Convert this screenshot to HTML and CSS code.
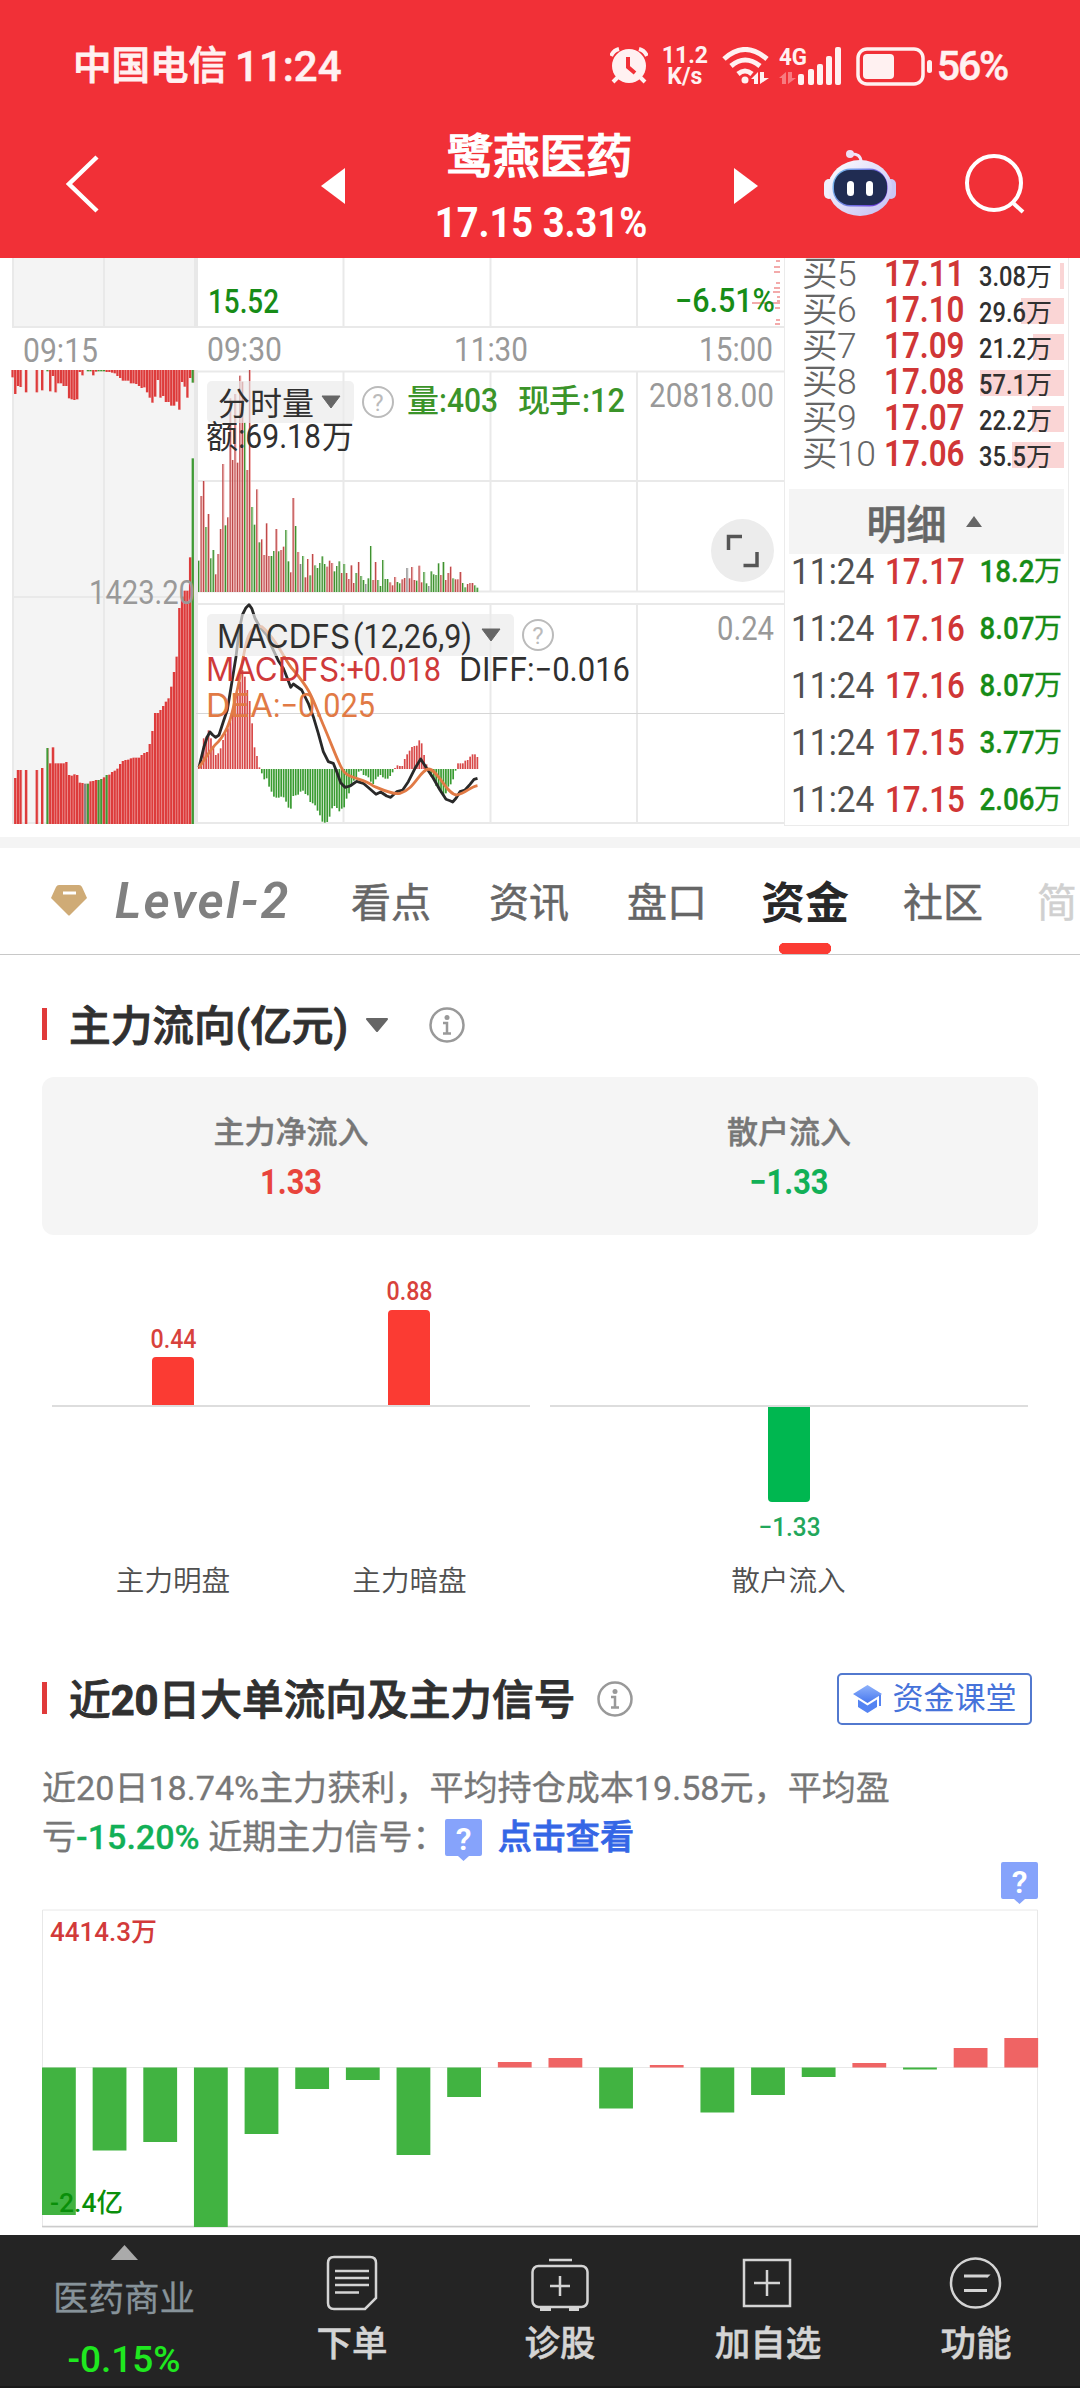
FILE: index.html
```html
<!DOCTYPE html>
<html lang="zh-CN">
<head>
<meta charset="utf-8">
<title>鹭燕医药</title>
<link rel="stylesheet" href="styles.css">
</head>
<body>
<header class="top">
  <div class="status">
    <span class="carrier">中国电信</span><span class="clock">11:24</span>
    <div class="status-icons">
      <svg class="ic-alarm" width="38" height="38" viewBox="0 0 38 38"><circle cx="19" cy="19" r="17" fill="#fff1f1"/><path d="M8 30l-5 5M30 30l5 5" stroke="#fff1f1" stroke-width="4"/><path d="M1 9a12 12 0 0 1 8-7M37 9a12 12 0 0 0-8-7" stroke="#fff1f1" stroke-width="4" fill="none"/><path d="M18 10v10l7 6" stroke="#f13037" stroke-width="4" fill="none"/></svg>
      <div class="speed"><span>11.2</span><span>K/s</span></div>
      <svg class="ic-wifi" width="47" height="38" viewBox="0 0 47 38" fill="none" stroke="#fff1f1" stroke-width="5"><path d="M2 12Q23-7 45 12M9 19Q23 7 38 19M16 27q7-6 14 0" /><circle cx="23" cy="33" r="3.5" fill="#fff1f1" stroke="none"/><path d="M29 32l7-7v12h-4v-5zM38 25v12l9-6h-5v-6z" fill="#fff1f1" stroke="none"/></svg>
      <svg class="ic-signal" width="63" height="38" viewBox="0 0 63 38" fill="#fff1f1"><text class="net" x="0" y="18" textLength="28" lengthAdjust="spacingAndGlyphs">4G</text><path d="M0 31l7-6v12h-4v-6zM9 25v12l8-6h-4v-6z" fill="#f77b80"/><rect x="19" y="27" width="6" height="11" rx="2"/><rect x="29" y="22" width="6" height="16" rx="2"/><rect x="38" y="17" width="6" height="21" rx="2"/><rect x="47" y="9" width="6" height="29" rx="2"/><rect x="56" y="0" width="6" height="38" rx="2"/></svg>
      <svg class="ic-battery" width="77" height="39" viewBox="0 0 77 39"><rect x="2" y="2" width="65" height="35" rx="9" fill="none" stroke="#fff1f1" stroke-width="3.5"/><rect x="7" y="7" width="31" height="25" rx="4" fill="#fff1f1"/><rect x="71" y="13" width="5" height="13" rx="2.5" fill="#fff1f1"/></svg>
      <span class="percent">56%</span>
    </div>
  </div>
  <div class="title-bar">
    <svg class="back" width="36" height="60" viewBox="0 0 36 60"><path d="M32 3L4 30l28 27" fill="none" stroke="#fff" stroke-width="4.5"/></svg>
    <svg class="prev" width="24" height="36" viewBox="0 0 24 36"><path d="M24 0v36L0 18z" fill="#fff"/></svg>
    <div class="stock"><h1>鹭燕医药</h1><p><span>17.15 3.31%</span></p></div>
    <svg class="next" width="24" height="36" viewBox="0 0 24 36"><path d="M0 0v36l24-18z" fill="#fff"/></svg>
    <svg class="robot" width="72" height="66" viewBox="0 0 72 66">
      <defs><linearGradient id="shell" x2="1" y2="1"><stop stop-color="#fff"/><stop offset="1" stop-color="#c2bdf2"/></linearGradient><linearGradient id="rim" x2="1" y2=".4"><stop stop-color="#79c6ee"/><stop offset="1" stop-color="#6a3fd9"/></linearGradient></defs>
      <path d="M26 4q11-1 11 8" fill="none" stroke="#f1e6fa" stroke-width="3"/><circle cx="26" cy="4" r="4" fill="#eddff5"/>
      <rect x="0" y="29" width="10" height="20" rx="5" fill="#f0effc"/><rect x="62" y="29" width="10" height="20" rx="5" fill="#cbc7f5"/>
      <ellipse cx="36" cy="38" rx="32" ry="28" fill="url(#shell)"/><rect x="8.500" y="18.500" width="55" height="38" rx="18" fill="url(#rim)"/><rect x="10" y="20" width="53" height="35" rx="16" fill="#202c52"/>
      <rect x="23" y="31" width="7" height="15" rx="3.5" fill="#fff"/><rect x="42" y="31" width="7" height="15" rx="3.5" fill="#fff"/>
    </svg>
    <svg class="search" width="62" height="62" viewBox="0 0 62 62" fill="none" stroke="#fff" stroke-width="4"><circle cx="30" cy="29" r="27"/><path d="M48 48l11 10"/></svg>
  </div>
</header>

<section class="quote">
  <svg class="trend" width="784" height="579" viewBox="0 258 784 579">
    <path class="pre" d="M13 258h182v70H13zM13 370h182v454H13z"/>
    <path class="grid" d="M13 258v70M104 258v70M343.500 258v70M490.500 258v70M637 258v70M13 327h771M13 370v454M104 370v454M343.500 371v221M490.500 371v221M637 371v221M196 371.500h588M196 481h588M196 591.500h588M13 597h182M196 604h588M343.500 604v219M490.500 604v219M637 604v219M13 823h771"/>
    <path class="axis" d="M196 258v70M196 370v454"/>
    <path class="thin" d="M196 713.500h588"/>
    <path class="pinkbars" d="M774 267h6M776 261h4M774 272h6M776 283h4M774 288h6M773 292h7M777 297h3M777 301h3M752 303h28M775 308h5M776 320h4M775 324h5"/>
    <g id="preopen"></g><g id="volume"></g><g id="macd"></g>
    <path class="diff" d="M199 767.300L204 746.700 207.300 736.700 210 732 212.700 735 215.700 737.300 219 735 223.300 721.700 227.300 710 231.700 683.300 236 656.700 239.300 630 242.300 615 246 607.700 249 604.700 251.700 608.300 255 618.300 259.300 626 266.700 635 271.700 646.700 278.300 660.700 283.300 668.300 287.300 678.300 290.700 687.300 293.300 684 301.700 690 308.300 703.300 313.300 716.700 318.300 733.300 323.300 751.700 328.300 761.700 333.300 763.300 337.300 773.300 340.700 782.700 345 787.300 350 786 356.700 781.300 363.300 783.300 370 789 376 794.300 380.700 792 386.700 796 390.700 797.300 396.700 791.700 402.700 790 408.300 781.700 415 768.300 420.700 759 426.700 768.300 433.300 778.300 440 790 446 799.300 450 800.700 452.700 802 456 798.300 460 791.700 465 790 470 784.300 474 779.300 477.500 778.300"/>
    <path class="dea" d="M199 767.300C207 757 209 750 218.300 741.700C228 731 231 721 240 676.700C246 638 249 625 261.700 626.700C277 639 286 663 293.300 670C312 692 312 698 323.300 725C337 757 341 772 348 775C357 780 364 779 373.300 786C383 790 394 795 400 793.300C414 790 420 770 428.300 769C438 769 446 794 456.700 795C466 793 470 787 477.500 785.700"/>
    <rect class="chip" x="207" y="381" width="147" height="42" rx="5"/>
    <rect class="chip" x="207" y="614" width="307" height="42" rx="5"/>
    <path d="M322 396h18l-9 12zM482 629h18l-9 12z" fill="#666" stroke="#666" stroke-linejoin="round"/>
    <g fill="none" stroke="#bbb" stroke-width="2"><circle cx="378" cy="402" r="15"/><circle cx="538" cy="635" r="15"/></g>
    <text class="help" x="378" y="411">?</text><text class="help" x="538" y="644">?</text>
    <g class="num">
      <text class="down" x="208" y="313" textLength="71" lengthAdjust="spacingAndGlyphs">15.52</text>
      <text class="down" x="675" y="312" textLength="100" lengthAdjust="spacingAndGlyphs">−6.51%</text>
      <text class="muted" x="23" y="362" textLength="75" lengthAdjust="spacingAndGlyphs">09:15</text>
      <text class="muted" x="207" y="361" textLength="75" lengthAdjust="spacingAndGlyphs">09:30</text>
      <text class="muted" x="454" y="361" textLength="74" lengthAdjust="spacingAndGlyphs">11:30</text>
      <text class="muted" x="699" y="361" textLength="74" lengthAdjust="spacingAndGlyphs">15:00</text>
      <text class="muted" x="89" y="604" textLength="106" lengthAdjust="spacingAndGlyphs">1423.20</text>
      <text class="muted" x="649" y="407" textLength="125" lengthAdjust="spacingAndGlyphs">20818.00</text>
      <text class="muted" x="717" y="640" textLength="57" lengthAdjust="spacingAndGlyphs">0.24</text>
      <text class="dark cn" x="218" y="415" textLength="96">分时量</text>
      <text class="vol cn" x="407" y="412">量</text><text class="vol" x="439" y="412" textLength="59" lengthAdjust="spacingAndGlyphs">:403</text>
      <text class="vol cn" x="518" y="412" textLength="63">现手</text><text class="vol" x="582" y="412" textLength="43" lengthAdjust="spacingAndGlyphs">:12</text>
      <text class="dark cn" x="206" y="448">额</text><text class="dark" x="238" y="448" textLength="83" lengthAdjust="spacingAndGlyphs">:69.18</text><text class="dark cn" x="322" y="448">万</text>
      <text class="dark latin" x="217" y="648" textLength="133" lengthAdjust="spacingAndGlyphs">MACDFS</text><text class="dark" x="353" y="648" textLength="119" lengthAdjust="spacingAndGlyphs">(12,26,9)</text>
      <text class="red latin" x="206" y="681" textLength="133" lengthAdjust="spacingAndGlyphs">MACDFS</text><text class="red" x="339" y="681" textLength="102" lengthAdjust="spacingAndGlyphs">:+0.018</text>
      <text class="dark latin" x="459" y="681" textLength="69" lengthAdjust="spacingAndGlyphs">DIFF</text><text class="dark" x="527" y="681" textLength="103" lengthAdjust="spacingAndGlyphs">:−0.016</text>
      <text class="orange latin" x="206" y="717" textLength="67" lengthAdjust="spacingAndGlyphs">DEA</text><text class="orange" x="273" y="717" textLength="102" lengthAdjust="spacingAndGlyphs">:−0.025</text>
    </g>
    <circle cx="742.500" cy="550.500" r="31.500" fill="#ececec"/>
    <path d="M728.500 550v-13.500H742M757 552v13.500h-13.500" fill="none" stroke="#555" stroke-width="3.500"/>
  </svg>
  <aside class="book">
    <div class="bids">
      <div class="bid"><span>买5</span><b>17.11</b><em><i>3.08</i>万</em><u style="width:4px"></u></div>
      <div class="bid"><span>买6</span><b>17.10</b><em><i>29.6</i>万</em><u style="width:43px"></u></div>
      <div class="bid"><span>买7</span><b>17.09</b><em><i>21.2</i>万</em><u style="width:31px"></u></div>
      <div class="bid"><span>买8</span><b>17.08</b><em><i>57.1</i>万</em><u style="width:84px"></u></div>
      <div class="bid"><span>买9</span><b>17.07</b><em><i>22.2</i>万</em><u style="width:32px"></u></div>
      <div class="bid"><span>买10</span><b>17.06</b><em><i>35.5</i>万</em><u style="width:52px"></u></div>
    </div>
    <div class="ticks-head">明细<svg width="16" height="11" viewBox="0 0 16 11"><path d="M8 0l8 11H0z" fill="#666"/></svg></div>
    <div class="tick"><span>11:24</span><b>17.17</b><em><i>18.2</i>万</em></div>
    <div class="tick"><span>11:24</span><b>17.16</b><em><i>8.07</i>万</em></div>
    <div class="tick"><span>11:24</span><b>17.16</b><em><i>8.07</i>万</em></div>
    <div class="tick"><span>11:24</span><b>17.15</b><em><i>3.77</i>万</em></div>
    <div class="tick"><span>11:24</span><b>17.15</b><em><i>2.06</i>万</em></div>
  </aside>
</section>

<nav class="tabs">
  <svg class="gem" width="36" height="32" viewBox="0 0 36 32"><path d="M8 1h20q2 0 3 2l5 11L19 31q-1 1-2 0L0 14 5 3q1-2 3-2z" fill="#cfab76"/><path d="M12 9h13" stroke="#fff" stroke-width="3"/></svg>
  <span class="level">Level-2</span>
  <a>看点</a><a>资讯</a><a>盘口</a><a class="active">资金</a><a>社区</a><a class="fade">简</a>
</nav>

<section class="flow">
  <div class="heading"><h2>主力流向(亿元)</h2>
    <svg class="caret" width="24" height="14" viewBox="0 0 24 14"><path d="M2 1h20L12 13z" fill="#666" stroke="#666" stroke-width="2" stroke-linejoin="round"/></svg>
    <svg class="info" width="38" height="38" viewBox="0 0 38 38"><circle cx="19" cy="19" r="16.500" fill="none" stroke="#999" stroke-width="2.500"/><circle cx="19" cy="11.500" r="2.500" fill="#999"/><path d="M15 17h4v10M15 27.500h8" fill="none" stroke="#999" stroke-width="2.500"/></svg>
  </div>
  <div class="summary">
    <div><p>主力净流入</p><b class="in">1.33</b></div>
    <div><p>散户流入</p><b class="out">−1.33</b></div>
  </div>
  <svg class="split" width="1080" height="365" viewBox="0 1240 1080 365">
    <path d="M52 1406h478M550 1406h478" stroke="#ddd" stroke-width="2"/>
    <path d="M152 1405v-44q0-4 4-4h34q4 0 4 4v44zM388 1405v-91q0-4 4-4h34q4 0 4 4v91z" fill="#fb3b33"/>
    <path d="M768 1407v91q0 4 4 4h34q4 0 4-4v-91z" fill="#00b750"/>
    <g class="val"><text x="173.500" y="1348" fill="#d8423c" textLength="46" lengthAdjust="spacingAndGlyphs">0.44</text><text x="409.500" y="1300" fill="#d8423c" textLength="46" lengthAdjust="spacingAndGlyphs">0.88</text><text x="789.500" y="1536" fill="#22a75b" textLength="62" lengthAdjust="spacingAndGlyphs">−1.33</text></g>
    <g class="cat"><text x="173" y="1591">主力明盘</text><text x="409.500" y="1591">主力暗盘</text><text x="788.500" y="1591">散户流入</text></g>
  </svg>
</section>

<section class="orders">
  <div class="heading"><h2>近<strong>20</strong>日大单流向及主力信号</h2>
    <svg class="info" width="38" height="38" viewBox="0 0 38 38"><circle cx="19" cy="19" r="16.500" fill="none" stroke="#999" stroke-width="2.500"/><circle cx="19" cy="11.500" r="2.500" fill="#999"/><path d="M15 17h4v10M15 27.500h8" fill="none" stroke="#999" stroke-width="2.500"/></svg>
    <a class="course"><svg width="29" height="28" viewBox="0 0 29 28"><defs><linearGradient id="hat" x2="0" y2="1"><stop stop-color="#8fb2fb"/><stop offset="1" stop-color="#4878ee"/></linearGradient></defs><path d="M14.500 0L29 9 14.500 18 0 9z" fill="url(#hat)"/><path d="M5 14.500l9.500 6 9.500-6V22l-9.500 6L5 22z" fill="#5584f2"/><path d="M27 10v11" stroke="#5584f2" stroke-width="2"/></svg>资金课堂</a>
  </div>
  <p class="note">近20日18.74%主力获利，平均持仓成本19.58元，平均盈<br>亏<b>-15.20%</b> 近期主力信号：<svg class="ask" width="37" height="43" viewBox="0 0 37 43"><path d="M2 0h33q2 0 2 2v33q0 2-2 2H24l-5.500 5L13 37H2q-2 0-2-2V2q0-2 2-2z" fill="#86a3fb"/><text x="18.500" y="31">?</text></svg><a>点击查看</a></p>
  <div class="marker"><svg class="ask" width="37" height="43" viewBox="0 0 37 43"><path d="M2 0h33q2 0 2 2v33q0 2-2 2H24l-5.500 5L13 37H2q-2 0-2-2V2q0-2 2-2z" fill="#86a3fb"/><text x="18.500" y="31">?</text></svg></div>
  <svg class="history" width="1080" height="326" viewBox="0 1909 1080 326">
    <path d="M42.500 1910h995v317h-995zM42 2067.500h996" fill="none" stroke="#e8e8e8"/><path d="M42 2226.500h996" stroke="#ccc" stroke-width="1.500"/>
    <g id="history"></g>
    <text class="hi" x="50" y="1941" textLength="107" lengthAdjust="spacingAndGlyphs">4414.3万</text><text class="lo" x="50" y="2212" textLength="73" lengthAdjust="spacingAndGlyphs">-2.4亿</text>
  </svg>
</section>

<footer class="bottom">
  <div class="sector"><svg width="27" height="15" viewBox="0 0 27 15"><path d="M13.500 0L27 15H0z" fill="#aaa"/></svg><span>医药商业</span><b>-0.15%</b></div>
  <div class="action"><svg width="58" height="58" viewBox="0 0 58 58"><path d="M11 3h36q6 0 6 6v35L42 55H11q-6 0-6-6V9q0-6 6-6z"/><path d="M12 17h34M12 24h34M12 31h34M12 38.500h24"/></svg><span>下单</span></div>
  <div class="action"><svg width="58" height="58" viewBox="0 0 58 58"><rect x="1.500" y="12" width="55" height="41" rx="6"/><path d="M18 6h23M29 22v20M19 32h20"/><path d="M9 55h11M38 55h10" stroke-width="4"/></svg><span>诊股</span></div>
  <div class="action"><svg width="58" height="58" viewBox="0 0 58 58"><path d="M5 6h46v46H5zM28 16v26M15 29h26"/></svg><span>加自选</span></div>
  <div class="action"><svg width="58" height="58" viewBox="0 0 58 58"><circle cx="28.500" cy="29" r="24.500"/><path d="M17 22h23l-1 1M17 36.500h23" stroke-width="3"/></svg><span>功能</span></div>
</footer>
<script src="charts.js"></script>
</body>
</html>
```
FILE: styles.css
```css
* { box-sizing: border-box; margin: 0; padding: 0; }
body { width: 1080px; height: 2388px; overflow: hidden; background: #fff; color: #333; font-family: Roboto, "Noto Sans CJK SC", sans-serif; display: flex; flex-direction: column; }
svg { display: block; flex: none; }
i, em { font-style: normal; }
u { text-decoration: none; }

.top { height: 258px; background: #f13037; color: #fff; flex: none; }
.status { height: 132px; padding: 0 73px 0 73px; display: flex; align-items: center; color: #fff1f1; font-weight: 500; }
.carrier { font-size: 38.5px; line-height: 50px; -webkit-text-stroke: .9px; }
.clock { font-size: 42px; margin-left: 8px; -webkit-text-stroke: .5px; }
.status-icons { margin-left: auto; display: flex; align-items: center; }
.speed { width: 46px; margin: 0 14px 0 14px; font: 700 23px/21px Roboto, sans-serif; text-align: center; display: flex; flex-direction: column; }
.ic-signal { margin-left: 10px; overflow: visible; }
.ic-battery { margin-left: 14px; }
.net { font: 700 23px Roboto, sans-serif; }
.percent { font-size: 41px; margin-left: 4px; letter-spacing: -2.2px; -webkit-text-stroke: .5px; }
.title-bar { height: 126px; display: flex; align-items: flex-start; padding: 0 54px 0 65px; }
.back { margin-top: 22px; }
.prev { margin: 36px 0 0 220px; }
.stock { width: 390px; text-align: center; margin-top: 0; }
.stock h1 { font-size: 46.5px; line-height: 50px; font-weight: 500; -webkit-text-stroke: 1.2px; }
.stock p { font-size: 43px; line-height: 50px; font-weight: 700; margin-top: 15px; white-space: nowrap; }
.stock p span { display: inline-block; transform: scaleX(.885); margin-right: -4px; }
.next { margin-top: 36px; }
.robot { margin: 18px 0 0 66px; }
.search { margin: 22px 0 0 68px; }

.quote { height: 579px; display: flex; flex: none; }
.pre { fill: #f4f4f4; }
.grid { stroke: #e9e9e9; stroke-width: 2; fill: none; }
.axis { stroke: #e8e8e8; stroke-width: 4; }
.thin { stroke: #d6d6d6; stroke-width: 1; }
.pinkbars { stroke: #f3aaaa; stroke-width: 2; fill: none; }
.diff, .dea { fill: none; stroke: #292929; stroke-width: 2.8; stroke-linejoin: round; }
.dea { stroke: #e17a45; }
.chip { fill: #ebebeb; fill-opacity: .68; }
.num text { font: 400 32.5px Roboto, "Noto Sans CJK SC", sans-serif; }
.num .cn { font-size: 32px; font-weight: 400; }
.num .latin { font-family: Inter, sans-serif; font-size: 32.5px; font-weight: 400; }
.num .muted { fill: #999; }
.num .dark { fill: #303030; }
.num .down { fill: #178c17; font-weight: 500; }
.num .vol { fill: #3b9429; font-weight: 500; }
.num .red { fill: #cf3a3a; }
.num .orange { fill: #e17a45; }
.help { font: 24px Roboto, sans-serif; fill: #bbb; text-anchor: middle; }

.book { width: 285px; height: 568px; border: solid #ebebeb; border-width: 0 1px 1px; overflow: hidden; padding: 0 4px; }
.bids { margin-top: -2px; height: 233px; }
.bid { height: 36px; display: grid; grid-template-columns: 82px 95px 1fr; padding-left: 13px; line-height: 36px; margin-bottom: -.1px; }
.bid > * { grid-row: 1; }
.bid span { grid-column: 1; font-size: 35.5px; font-weight: 350; color: #666; white-space: nowrap; letter-spacing: -.5px; }
.bid b, .tick b { font-size: 36px; font-weight: 500; color: #d03636; transform: scaleX(.87); transform-origin: left; }
.bid b { font-weight: 600; }
.bid em { grid-column: 3; font-size: 26px; font-weight: 400; color: #303030; z-index: 1; white-space: nowrap; margin-top: 3px; display: flex; }
.bid i { display: inline-block; width: 47px; font-size: 28.5px; font-weight: 500; transform: scaleX(.83); transform-origin: left; }
.bid u { grid-column: 3; justify-self: end; align-self: center; height: 26px; background: #fad5d5; }
.ticks-head { height: 65px; background: #f4f4f4; color: #666; font-size: 40px; font-weight: 500; display: flex; align-items: center; justify-content: center; gap: 19px; padding-right: 5px; -webkit-text-stroke: .6px; }
.tick { height: 57px; padding: 2px 2px 23px; line-height: 32px; display: flex; align-items: center; }
.tick span { width: 94px; font-size: 36px; color: #505050; transform: scaleX(.93); transform-origin: left; }
.tick b { width: 84px; }
.tick em { margin-left: auto; color: #178c17; font-size: 28px; font-weight: 400; display: flex; -webkit-text-stroke: .3px; }
.tick i { font-size: 31.500px; font-weight: 500; transform: scaleX(.88); transform-origin: right; }

.tabs { height: 118px; border-top: 11px solid #f4f4f4; border-bottom: 1px solid #c8c8c8; display: flex; align-items: center; padding-left: 51px; color: #666; overflow: hidden; flex: none; white-space: nowrap; }
.gem { margin-top: -2px; }
.level { width: 236px; margin-left: 28px; font: italic 600 50px Roboto, sans-serif; letter-spacing: 2.2px; color: #808080; }
.tabs a { font-size: 40px; margin-right: 58px; height: 106px; line-height: 112px; font-weight: 400; -webkit-text-stroke: .5px; }
.tabs a:nth-of-type(3), .tabs a.active, .tabs a:nth-of-type(5) { margin-right: 54px; }
.tabs a.active { font-size: 44px; font-weight: 700; -webkit-text-stroke: 0; color: #282828; background: linear-gradient(#fb3b33, #fb3b33) center bottom / 42px 11px no-repeat, radial-gradient(circle at 23.500px 100.500px, #fb3b33 5.500px, transparent 6px), radial-gradient(circle at 64.500px 100.500px, #fb3b33 5.500px, transparent 6px); }
.tabs .fade { opacity: .3; margin-right: 0; }

.heading { display: flex; align-items: center; }
.heading h2 { font-size: 41.700px; line-height: 60px; font-weight: 500; color: #303030; display: flex; align-items: center; padding-top: 2px; -webkit-text-stroke: .9px; }
.heading h2::before { content: ""; width: 5px; height: 32px; background: #e03a3a; margin: -6px 22px 0 0; }
.flow { height: 650px; padding: 0 42px; flex: none; }
.flow .heading { height: 60px; margin-top: 41px; }
.caret { margin: -2px 0 0 17px; }
.flow .info { margin: -3px 0 0 39px; }
.summary { height: 158px; margin-top: 21px; background: #f5f5f5; border-radius: 12px; display: flex; }
.summary div { width: 50%; text-align: center; display: flex; flex-direction: column; padding-top: 32px; }
.summary p { font-size: 31px; line-height: 48px; color: #777; font-weight: 500; -webkit-text-stroke: .4px; }
.summary b { font-size: 35px; line-height: 51px; transform: scaleX(.88); }
.in { color: #e8443c; }
.out { color: #12b057; }
.split { margin: 5px -42px 0; }
.val { font: 500 26px Roboto, sans-serif; text-anchor: middle; }
.cat { font: 350 28.600px "Noto Sans CJK SC", sans-serif; text-anchor: middle; fill: #505050; }

.orders { height: 630px; padding: 0 42px; flex: none; }
.orders .heading { height: 60px; margin-top: 65px; }
.orders h2 strong { font-weight: 700; }
.orders .info { margin-left: 21px; margin-top: -2px; }
.course { margin: -3px 6px 0 auto; width: 195px; height: 52px; border: 2px solid #5279cf; border-radius: 5px; display: flex; align-items: center; justify-content: center; gap: 11px; color: #4673da; font-size: 31px; line-height: 48px; }
.note { margin-top: 34px; font-size: 34.100px; line-height: 49px; height: 98px; color: #777; white-space: nowrap; -webkit-text-stroke: .3px; }
.note b { font-weight: 500; color: #12b057; }
.note a { color: #3566e6; font-weight: 500; margin-left: 16px; -webkit-text-stroke: .8px; }
.ask { display: inline-block; vertical-align: -10px; -webkit-text-stroke: 0; }
.note .ask { margin: -12px 0 -10px -2px; vertical-align: -3px; }
.ask text { font: 600 32px Roboto, sans-serif; fill: #fff; text-anchor: middle; }
.marker { height: 47px; display: flex; justify-content: flex-end; }
.history { margin: 0 -42px; }
.hi, .lo { font: 500 26px Roboto, "Noto Sans CJK SC", sans-serif; fill: #d23a3a; }
.lo { fill: #0a8f0a; }

.bottom { height: 153px; background: #242424; border-bottom: 2px solid #1a1a1a; display: flex; flex: none; }
.sector { width: 248px; display: flex; flex-direction: column; align-items: center; padding-top: 10px; }
.sector span { font-size: 35.500px; line-height: 50px; color: #87939a; margin-top: 14px; -webkit-text-stroke: .3px; }
.sector b { font-size: 37px; line-height: 50px; font-weight: 500; color: #1fe81f; margin-top: 11px; }
.action { width: 208px; display: flex; flex-direction: column; align-items: center; padding-top: 19px; }
.action svg { fill: none; stroke: #d4d4d4; stroke-width: 2.500; }
.action span { font-size: 35.500px; line-height: 50px; font-weight: 500; color: #d4d4d4; margin-top: 7px; -webkit-text-stroke: .5px; }
```
FILE: charts.js
```js
const NS = 'http://www.w3.org/2000/svg';
const R = '#dd3b3b', G = '#3f9a35', K = '#858585';
function bar(id, x, y1, y2, w, fill) {
  const r = document.createElementNS(NS, 'rect');
  r.setAttribute('x', x); r.setAttribute('y', Math.min(y1, y2));
  r.setAttribute('width', w); r.setAttribute('height', Math.abs(y2 - y1));
  r.setAttribute('fill', fill);
  document.getElementById(id).appendChild(r);
}

// Call auction: unmatched volume hangs from the top, matched volume rises from the bottom.
const hang = [22,72,48,51,0,67,0,0,0,67,0,61,0,4,64,18,67,40,40,48,48,85,88,90,88,6,16,0,4,4,16,5,4,4,4,6,6,8,10,18,24,32,32,32,40,40,42,48,54,52,67,83,98,80,30,83,78,96,96,107,107,95,119,36,50,83,24,38];
const rise = [0,138,162,162,0,162,0,0,0,162,0,168,0,228,182,230,182,182,182,182,186,147,145,149,147,124,123,121,121,128,129,132,132,135,140,147,148,156,160,166,180,189,192,193,197,199,199,199,207,213,216,240,279,333,333,342,354,367,377,412,456,502,648,682,700,700,800,1097];
const hangGreen = [13, 28, 29, 32, 33, 34, 67], riseGreen = [13, 28, 32, 33, 35, 67];
hang.forEach((v, i) => {
  const x = 11.4 + i * 2.69;
  if (v) bar('preopen', x, 370, 370 + v / 3, 2.3, hangGreen.includes(i) ? G : R);
  if (v) bar('preopen', x + 2.2, 370, 370 + v / 3, .5, '#ee8a8a');
  if (rise[i]) {
    bar('preopen', x, 824, 824 - rise[i] / 3, 2.3, i === 27 ? K : riseGreen.includes(i) ? G : R);
    if (i < 67) bar('preopen', x + 2.2, 824, 824 - rise[i] / 3, .5, '#ee8a8a');
  }
});

// Minute volume, tops measured from the pane's base line.
const vol = 'g94 r288 r333 g195 r234 g101 g126 r53 r114 r189 r384 g200 r224 r581 r396 r594 r388 r649 r631 g508 r366 r666 g255 g202 r308 g149 r158 r111 r206 r108 g108 g123 r189 g122 r126 r136 g186 g92 r59 r282 g198 r120 k84 g108 r44 r99 g50 r114 g80 g72 g87 g107 g84 r76 r94 r87 g62 g78 g92 r57 g84 r57 r39 r80 r27 g57 r90 g48 g36 k24 g41 g138 r36 r90 g36 g18 g96 g39 g39 r29 r20 r45 g30 g26 r38 r42 k72 r41 r75 r36 g34 r79 r29 g60 g26 k18 g62 g53 g51 g86 r51 g90 r36 r57 r76 g41 r38 r38 r60 g27 g14 r24 r27 r27 g20 g13'.split(' ');
const tone = { r: ['#bd4a4a', '#f3a6a6'], g: ['#3f9030', '#a9d89f'], k: ['#858585', '#ccc'] };
vol.forEach((s, i) => {
  const x = 198 + i * 2.422, y = 592 - s.slice(1) / 3, c = tone[s[0]];
  bar('volume', x, 592, y, 1.4, c[0]);
  bar('volume', x + 1.4, 592, y, .7, c[1]);
});

// MACD histogram around the zero line.
const macd = [7,37,92,97,116,92,67,42,47,62,87,107,122,147,167,192,227,262,297,277,237,204,137,65,39,5,-13,-31,-28,-53,-68,-83,-86,-86,-83,-85,-98,-116,-119,-81,-79,-77,-68,-65,-75,-79,-99,-103,-109,-125,-139,-158,-161,-159,-143,-118,-111,-117,-127,-119,-115,-89,-73,-48,-35,-25,-8,-5,-18,-20,-25,-38,-45,-31,-23,-18,-25,-29,-29,-21,-10,3,11,9,9,30,44,55,66,69,70,86,77,42,14,-8,-23,-33,-51,-58,-71,-81,-73,-53,-46,-31,-5,17,17,17,25,27,37,44,44,36];
macd.forEach((v, i) => bar('macd', 198 + i * 2.422, 769, 769 - v / 3, 1.7, v > 0 ? '#d84949' : '#399b31'));

// Twenty-day net flow of large orders.
const net = [-147.5,-83,-74.500,-159.5,-66.500,-21.500,-12.500,-87.500,-29.500,5.500,9.500,-41,2.500,-45,-27.500,-9.500,4.500,-2,19.500,29.500];
net.forEach((v, i) => bar('history', 42 + i * 50.65, 2067.500, 2067.500 - v, 33.800, v > 0 ? '#ef6464' : '#41b341'));
```
